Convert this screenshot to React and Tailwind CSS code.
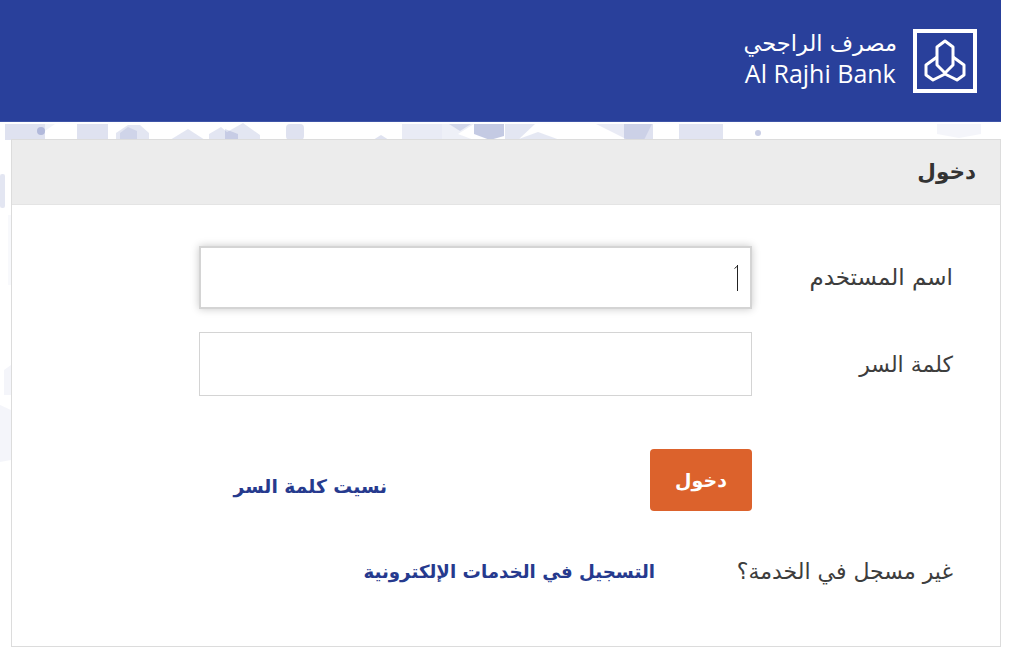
import React from 'react';

const Pattern = () => (
  <svg className="absolute left-0 top-[122px] -z-10" width="1009" height="340" viewBox="0 122 1009 340">
    <g fill="#2a3f9b">
      <path d="M5 124h40v16H5z" opacity=".15" />
      <circle cx="41" cy="131" r="4" opacity=".25" />
      <path d="M45 124h10l-10 7z" opacity=".06" />
      <path d="M77 124h31v16H77z" opacity=".15" />
      <path d="M116 140v-7l12-8 12 0 9 8v7z" opacity=".13" />
      <path d="M120 140v-7l8-6 9 4v9z" opacity=".1" />
      <path d="M170 140l18-11 17 11z" opacity=".13" />
      <path d="M209 140v-6l12-7 6 5 16-9 17 12v5z" opacity=".13" />
      <path d="M225 140v-11l13 5v6z" opacity=".15" />
      <rect x="286" y="124" width="18" height="16" rx="4" opacity=".15" />
      <path d="M373 140l8-5 8 5z" opacity=".15" />
      <path d="M402 124h40v16h-40z" opacity=".1" />
      <path d="M442 124h32l-16 10 16 6h-32z" opacity=".08" />
      <path d="M449 124h22l-11 7z" opacity=".14" />
      <path d="M474 124h30v12l-14 4-16-6z" opacity=".28" />
      <path d="M505 124h30l-17 16h-13z" opacity=".13" />
      <path d="M516 140l22-8 22 8z" opacity=".12" />
      <path d="M596 124h56l-8 16h-16z" opacity=".1" />
      <path d="M624 124h29v16h-29z" opacity=".15" />
      <path d="M679 124h44v16h-44z" opacity=".14" />
      <circle cx="758" cy="133" r="3" opacity=".25" />
      <path d="M937 124h44v10l-22 4-22-4z" opacity=".05" />
      <rect x="0" y="174" width="5" height="34" rx="2" opacity=".13" />
      <path d="M8 215h4v70H8z" opacity=".03" />
      <path d="M4 370l7-5v30H4z" opacity=".05" />
      <path d="M0 405l11 5v50l-11 2z" opacity=".05" />
    </g>
  </svg>
);

const Logo = () => (
  <div className="flex items-center gap-[16px]">
    <div className="flex h-[64px] w-[64px] items-center justify-center border-4 border-white">
      <svg width="56" height="56" viewBox="0 0 56 56" fill="none" stroke="white" strokeWidth="3" strokeLinejoin="round">
        <path d="M28 8l-8 6v18l8 8 8-8V14z" />
        <path d="M20 24L9 32v10l7 5 12-6 12 6 7-5V32l-11-8" />
      </svg>
    </div>
    <div className="flex -translate-y-[3px] flex-col items-center">
      <span className="font-['DejaVu_Sans',sans-serif] text-[22.5px] leading-[30px]" dir="rtl">مصرف الراجحي</span>
      <span className="font-['Open_Sans',sans-serif] text-[25px] leading-[30px]">Al Rajhi Bank</span>
    </div>
  </div>
);

const Caret = () => (
  <svg width="5" height="26" viewBox="0 0 5 26" fill="none" stroke="#222">
    <path d="M3.5 0v26M0.5 3.5L3.5 1" />
  </svg>
);

export default function App() {
  return (
    <div dir="rtl" className="relative h-[650px] overflow-hidden font-['DejaVu_Sans',sans-serif] text-[#3d3d3d]">
      <Pattern />
      <header className="mr-[8px] flex h-[122px] items-center justify-start border-b border-[#3f55a8] bg-[#29409b] pr-[24px] text-white">
        <Logo />
      </header>

      <main className="mt-[17px] mr-[8px] w-[990px] border border-[#dcdcdc] bg-white">
        <div className="flex h-[65px] items-center border-b border-[#e4e4e4] bg-[#ececec] pr-[24px] text-[21.5px] font-bold text-[#333]">
          دخول
        </div>

        <div className="h-[441px] pr-[47px] pt-[41px]">
          <div className="flex items-center">
            <label className="w-[201px] text-[23px]">اسم المستخدم</label>
            <div className="flex h-[63px] w-[553px] items-center border-2 border-[#d4d4d4] px-[11px] shadow-[0_0_8px_rgba(0,0,0,0.22)]">
              <Caret />
            </div>
          </div>

          <div className="mt-[23px] flex items-center">
            <label className="w-[201px] text-[22px]">كلمة السر</label>
            <div className="h-[64px] w-[553px] border border-[#d4d4d4]" />
          </div>

          <div className="mt-[53px] flex items-center">
            <div className="w-[201px]" />
            <button className="flex h-[62px] w-[102px] items-center justify-center rounded-[4px] bg-[#dc622c] text-[19px] font-bold text-white">
              دخول
            </button>
            <a className="mt-[14px] mr-[263px] text-[18.75px] font-bold text-[#263a8e]">نسيت كلمة السر</a>
          </div>

          <div className="mt-[44px] flex items-center">
            <label className="w-[298px] text-[22px]">غير مسجل في الخدمة؟</label>
            <a className="text-[18.25px] font-bold text-[#263a8e]">التسجيل في الخدمات الإلكترونية</a>
          </div>
        </div>
      </main>
    </div>
  );
}
